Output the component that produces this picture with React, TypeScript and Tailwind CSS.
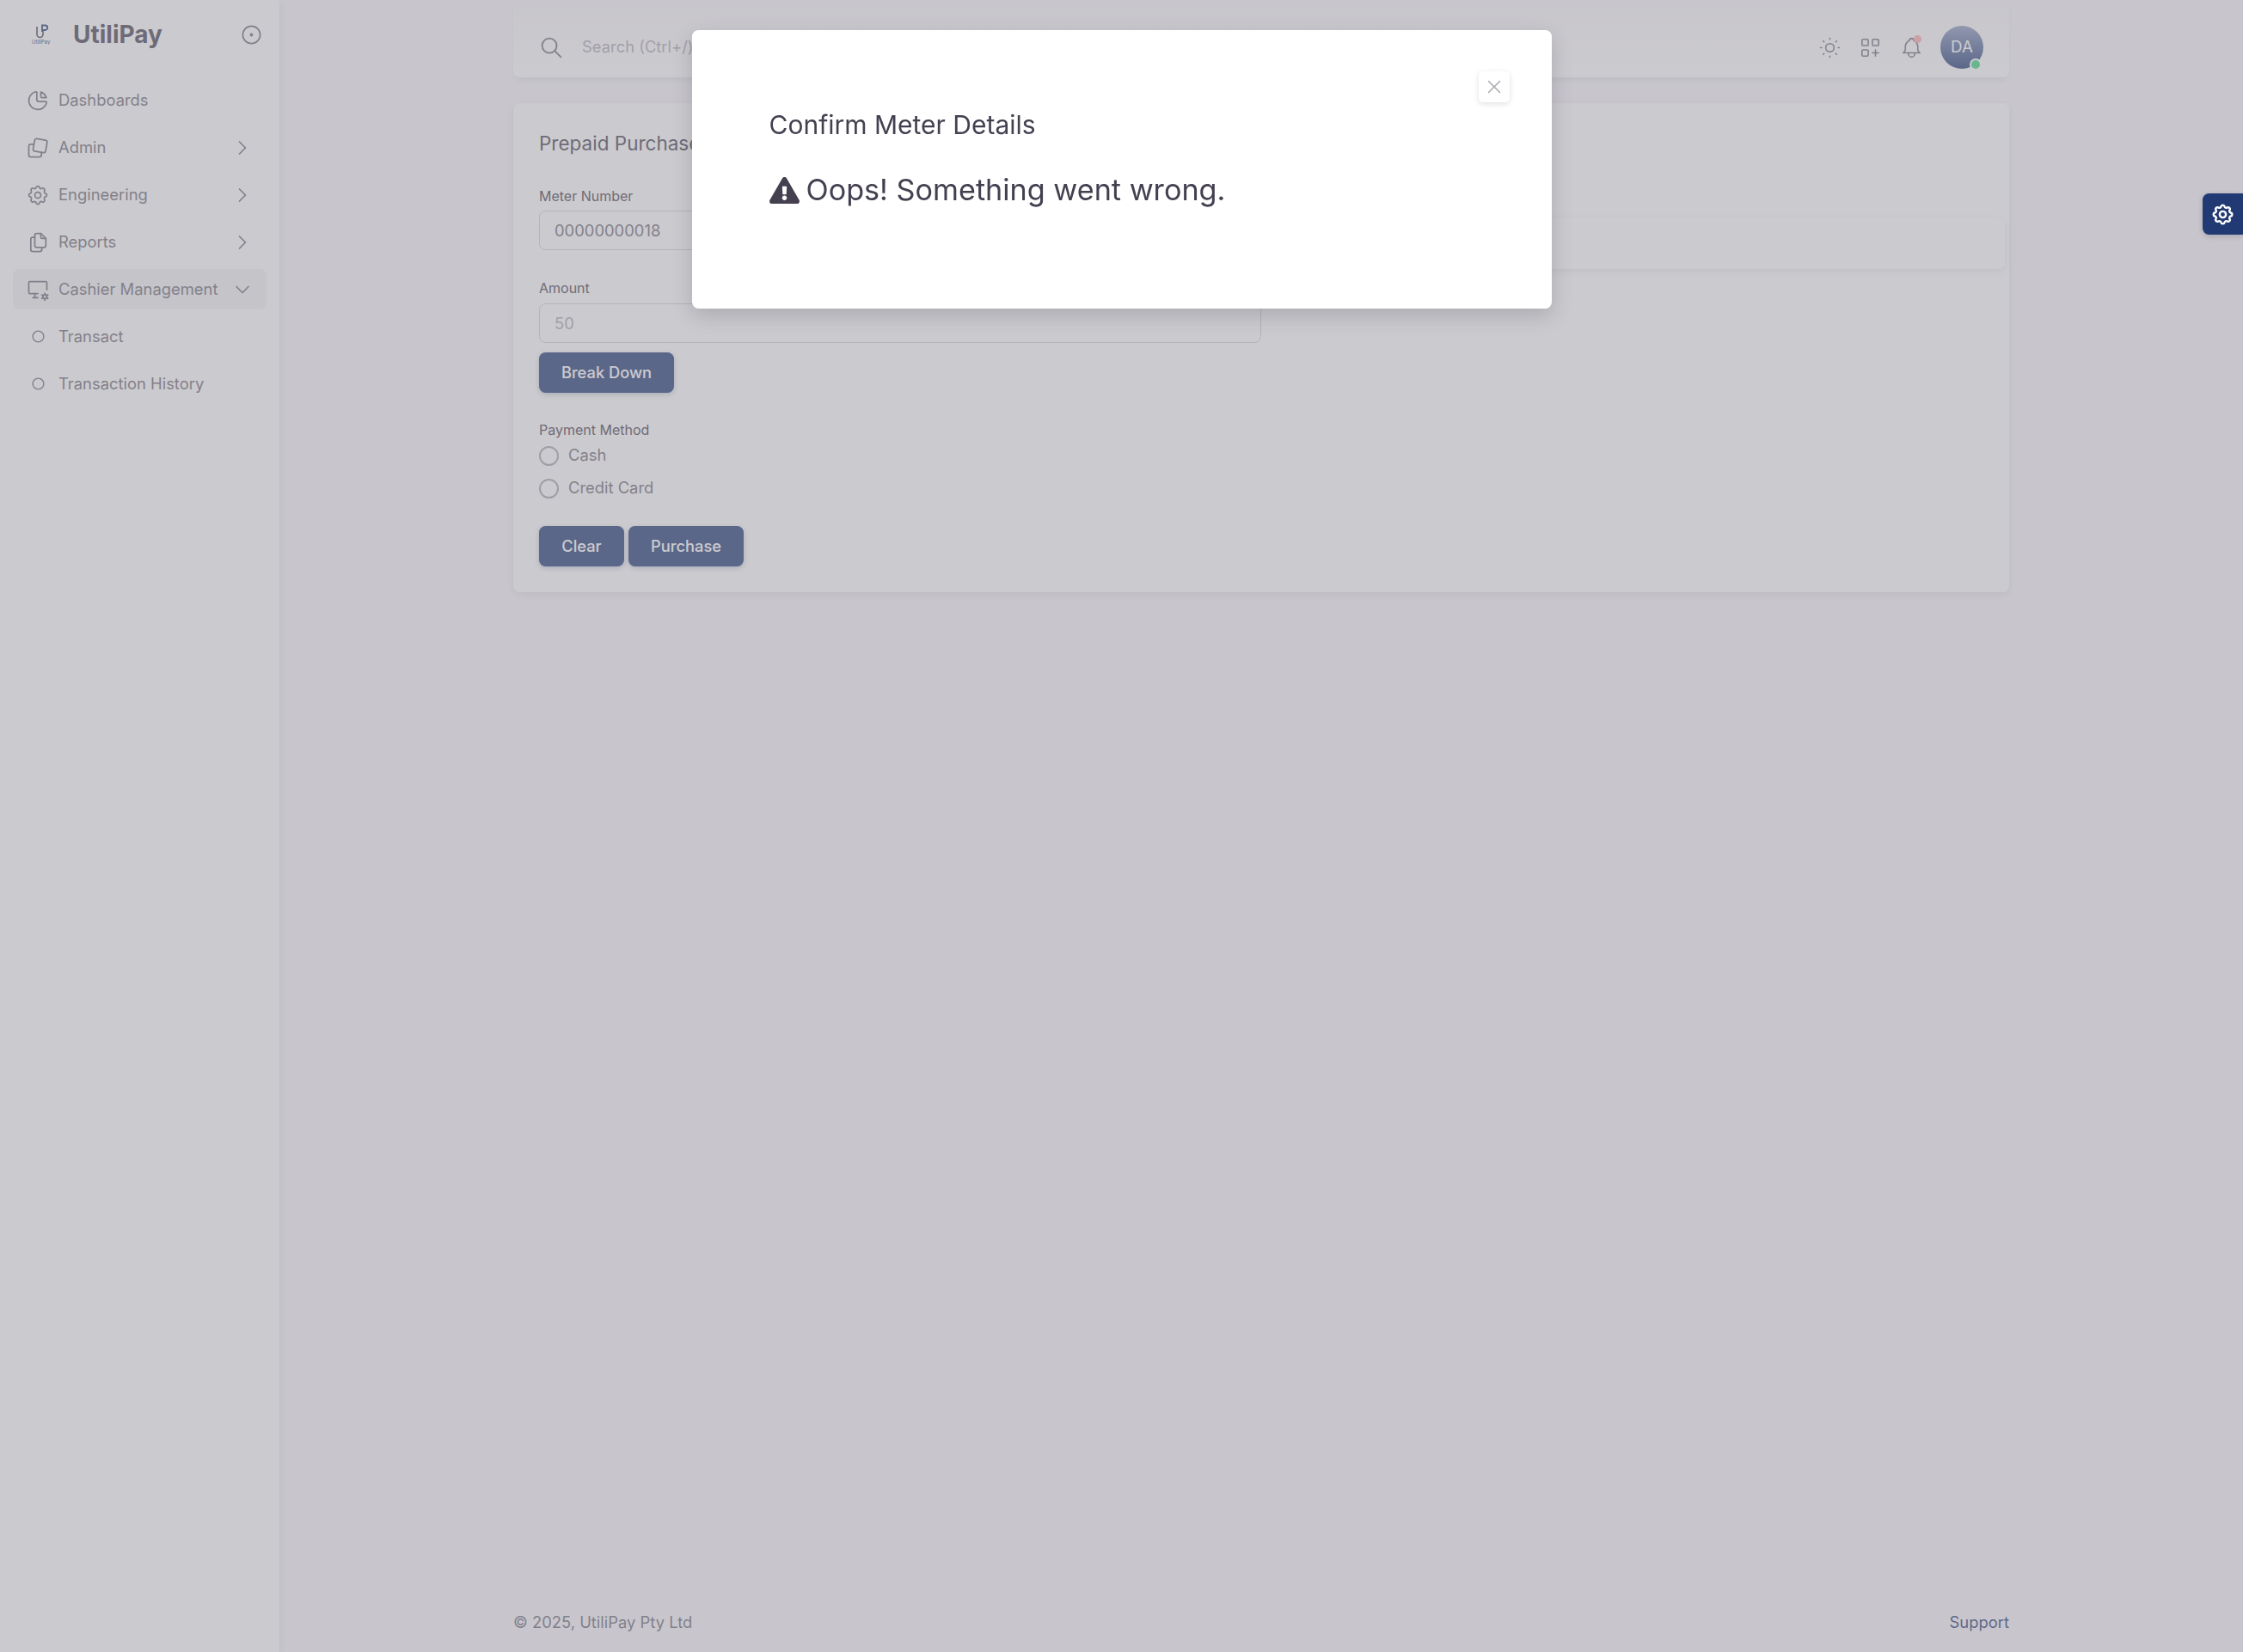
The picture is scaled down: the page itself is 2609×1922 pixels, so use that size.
import { FaExclamationTriangle } from 'react-icons/fa';
import {
  TbBell,
  TbChartPie,
  TbChevronDown,
  TbChevronRight,
  TbCircle,
  TbCircleDot,
  TbDeviceDesktopCog,
  TbFiles,
  TbLayoutGridAdd,
  TbSearch,
  TbSettings,
  TbSun,
  TbX,
} from 'react-icons/tb';

// tilted square in front of a smaller one, the package's version sits too straight
const AdminIcon = ({ size, strokeWidth }: { size: number; strokeWidth: number }) => (
  <svg
    width={size}
    height={size}
    viewBox="0 0 24 24"
    fill="none"
    stroke="currentColor"
    strokeWidth={strokeWidth}
    strokeLinecap="round"
    strokeLinejoin="round"
  >
    <rect x="8" y="3.6" width="12.6" height="12.6" rx="2" transform="rotate(10 14.3 9.9)" />
    <path d="M7.6 8.4H5a2 2 0 0 0-2 2V19a2 2 0 0 0 2 2h8.6a2 2 0 0 0 2-2v-2.6" />
  </svg>
);

const navItems = [
  { label: 'Dashboards', icon: TbChartPie },
  { label: 'Admin', icon: AdminIcon, arrow: true },
  { label: 'Engineering', icon: TbSettings, arrow: true },
  { label: 'Reports', icon: TbFiles, arrow: true },
];

const Logo = () => (
  <svg width="24" height="24" viewBox="0 0 24 24" className="shrink-0">
    <path d="M6 3v9a3.5 3.5 0 0 0 7 0V6" fill="none" stroke="#444050" strokeWidth="1.6" />
    <path d="M12 9V1.5h3.5a2.6 2.6 0 0 1 0 5.5H12" fill="none" stroke="#1f3974" strokeWidth="1.8" />
    <text x="0" y="22.5" fontSize="6" fill="#1f3974" fontFamily="Inter, sans-serif">
      UtiliPay
    </text>
  </svg>
);

const Sidebar = () => (
  <aside className="w-[325px] shrink-0 bg-white shadow-[0_3px_10px_rgba(47,43,61,0.12)] z-10">
    <div className="h-[80px] flex items-center pl-[37px] pr-[19px]">
      <Logo />
      <span className="ml-[24px] text-[28px] font-bold text-[#444050] flex-1">UtiliPay</span>
      <TbCircleDot className="text-[#6d6b77]" size={27} strokeWidth={1.5} />
    </div>
    <nav className="mt-[13px] px-[15px] flex flex-col gap-[8px]">
      {navItems.map(({ label, icon: Icon, arrow }) => (
        <div key={label} className="h-[47px] flex items-center pl-[15px] pr-[14px] text-[18.4px] text-[#6d6b77]">
          <Icon size={28} strokeWidth={1.5} />
          <span className="ml-[10px] flex-1">{label}</span>
          {arrow && <TbChevronRight size={28} strokeWidth={1.5} />}
        </div>
      ))}
      <div className="h-[47px] flex items-center pl-[15px] pr-[14px] rounded-[7.5px] bg-[#2f2b3d]/[0.06] text-[18.4px] text-[#6d6b77]">
        <TbDeviceDesktopCog size={28} strokeWidth={1.5} className="shrink-0" />
        <span className="ml-[10px] flex-1">Cashier Management</span>
        <TbChevronDown size={28} strokeWidth={1.5} />
      </div>
      {['Transact', 'Transaction History'].map((label) => (
        <div key={label} className="h-[47px] flex items-center pl-[21px] text-[18.4px] text-[#6d6b77]">
          <TbCircle size={17} strokeWidth={2} className="shrink-0" />
          <span className="ml-[15px]">{label}</span>
        </div>
      ))}
    </nav>
  </aside>
);

// top of the bar fades into the page, only the bottom corners show
const Navbar = () => (
  <header className="h-[90px] pt-[20px] rounded-b-[7.5px] bg-gradient-to-b from-[#f8f7fa] to-white shadow-[0_5px_8px_-3px_rgba(47,43,61,0.12)] flex items-center px-[30px]">
    <TbSearch size={29} strokeWidth={1.5} className="text-[#6d6b77]" />
    <span className="ml-[21px] flex-1 text-[18.4px] text-[#acaab1]">Search (Ctrl+/)</span>
    <div className="flex items-center gap-[18.5px] text-[#6d6b77]">
      <TbSun size={29} strokeWidth={1.3} />
      <TbLayoutGridAdd size={29} strokeWidth={1.3} />
      <div className="relative">
        <TbBell size={29} strokeWidth={1.3} />
        <span className="absolute top-0 right-[3px] w-[9px] h-[9px] rounded-full bg-[#ffabae]" />
      </div>
      <div className="relative ml-[1px] w-[50px] h-[50px] rounded-full bg-gradient-to-b from-[#8c9ac0] to-[#1f3974] flex items-center justify-center text-white text-[18.75px]">
        DA
        <span className="absolute -bottom-[2px] right-[2px] w-[14px] h-[14px] rounded-full bg-[#3bd57c] border-2 border-white" />
      </div>
    </div>
  </header>
);

const PrimaryButton = ({ label, width }: { label: string; width: string }) => (
  <button className={`${width} h-[47px] rounded-[7.5px] bg-[#1f3974] text-white text-[18.3px] font-medium shadow-[0_2px_6px_rgba(31,57,116,0.3)]`}>
    {label}
  </button>
);

const Radio = ({ label }: { label: string }) => (
  <label className="flex items-center gap-[11px] h-[23px] text-[18.4px] text-[#6d6b77]">
    <span className="w-[23px] h-[23px] rounded-full border-2 border-[#a8a6ae]" />
    {label}
  </label>
);

const PurchaseCard = () => (
  <section className="mt-[30px] h-[569px] rounded-[7.5px] bg-white shadow-[0_3px_10px_rgba(47,43,61,0.1)] px-[30px] pt-[32px]">
    <h5 className="text-[22.5px] leading-[30px] text-[#444050]">Prepaid Purchase</h5>
    <div className="flex gap-[30px]">
      <div className="w-[840px] shrink-0">
        <label className="block mt-[35px] text-[16px] leading-[22px] text-[#444050]">Meter Number</label>
        <div className="mt-[6px] h-[46px] rounded-[7.5px] border border-[#d1d0d4] px-[17px] pt-[1px] flex items-center text-[18.4px] text-[#6d6b77]">
          00000000018
        </div>
        <label className="block mt-[33px] text-[16px] leading-[22px] text-[#444050]">Amount</label>
        <div className="mt-[7px] h-[46px] rounded-[7.5px] border border-[#d1d0d4] px-[17px] pt-[1px] flex items-center text-[18.4px] text-[#acaab1]">
          50
        </div>
        <div className="mt-[11px]">
          <PrimaryButton label="Break Down" width="w-[157px]" />
        </div>
        <label className="block mt-[32px] text-[16px] leading-[22px] text-[#444050]">Payment Method</label>
        <div className="mt-[7.5px] flex flex-col gap-[15px]">
          <Radio label="Cash" />
          <Radio label="Credit Card" />
        </div>
        <div className="mt-[32.5px] flex gap-[5px]">
          <PrimaryButton label="Clear" width="w-[99px]" />
          <PrimaryButton label="Purchase" width="w-[134px]" />
        </div>
      </div>
      <div className="flex-1 -mr-[25px] mt-[71px] h-[60px] self-start rounded-[7.5px] bg-white shadow-[0_3px_10px_rgba(47,43,61,0.1)]" />
    </div>
  </section>
);

const ErrorModal = () => (
  <div className="fixed inset-0 z-30 flex justify-center bg-[#97959e]/50">
    <div className="relative mt-[35px] w-[1000px] h-[324px] rounded-[7.5px] bg-white shadow-[0_8px_24px_rgba(47,43,61,0.2)] px-[90px] pt-[90px]">
      <button className="absolute top-[48px] right-[49px] w-[36px] h-[36px] rounded-[5px] bg-white shadow-[0_2px_6px_rgba(47,43,61,0.14)] flex items-center justify-center text-[#acaab1]">
        <TbX size={26} strokeWidth={1.4} />
      </button>
      <h4 className="text-[30px] leading-[40px] text-[#444050]">Confirm Meter Details</h4>
      <div className="mt-[32px] flex items-center gap-[8px] text-[34.2px] leading-[48px] text-[#444050]">
        <FaExclamationTriangle size={35} />
        Oops! Something went wrong.
      </div>
    </div>
  </div>
);

export default function App() {
  return (
    <div className="min-h-screen flex bg-[#f8f7fa] font-['Inter',sans-serif]">
      <Sidebar />
      <main className="flex-1 min-w-0 flex flex-col">
        <div className="w-[1740px] mx-auto flex-1 flex flex-col">
          <Navbar />
          <PurchaseCard />
          <footer className="mt-auto h-[48px] flex justify-between text-[18.4px] text-[#6d6b77]">
            <span>© 2025, UtiliPay Pty Ltd</span>
            <span className="text-[#1f3974]">Support</span>
          </footer>
        </div>
      </main>
      <ErrorModal />
      <div className="fixed z-40 top-[225px] right-0 w-[47px] h-[48px] rounded-l-[7.5px] bg-[#213a74] flex items-center justify-center text-white shadow-[0_2px_6px_rgba(47,43,61,0.2)]">
        <TbSettings size={29} strokeWidth={2} />
      </div>
    </div>
  );
}
